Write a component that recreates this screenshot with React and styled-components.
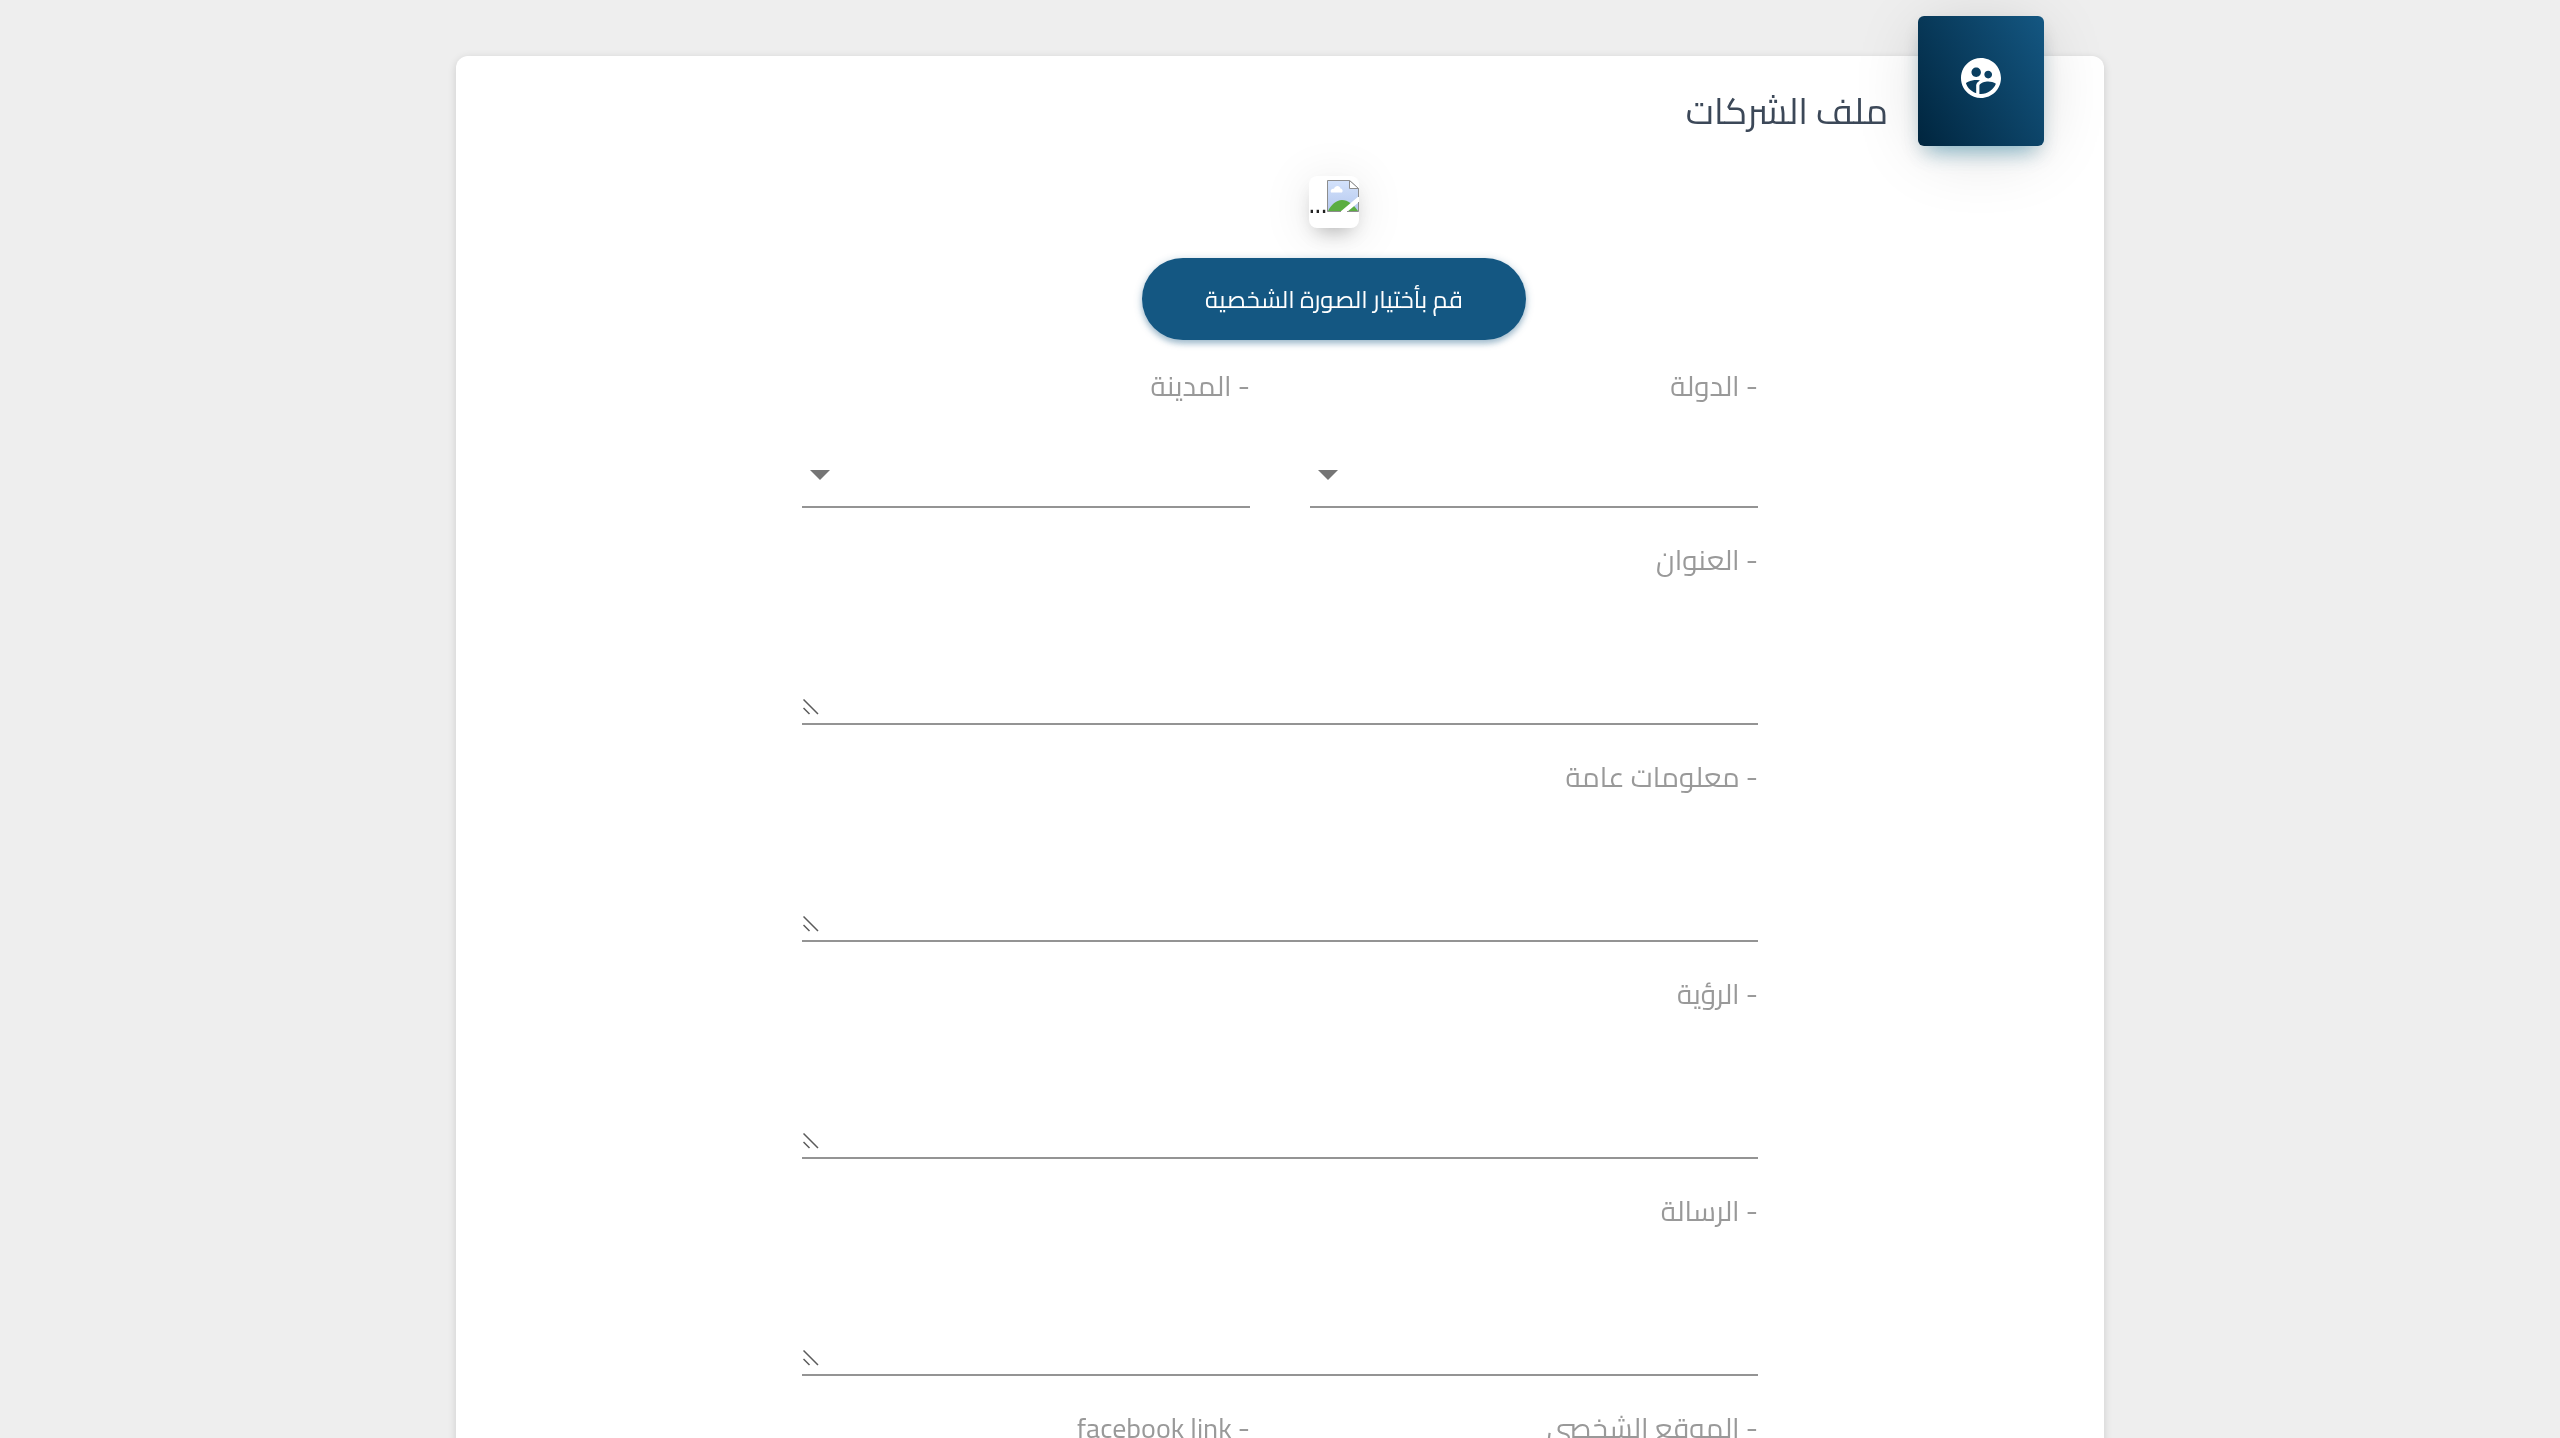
import React from "react";
import styled, { createGlobalStyle } from "styled-components";

const GlobalStyle = createGlobalStyle`
  * { box-sizing: border-box; }
  body {
    margin: 0;
    background: #eee;
    font-family: Cairo, "Noto Kufi Arabic", "DejaVu Sans", sans-serif;
    font-weight: 400;
  }
`;

const Page = styled.main`
  display: flex;
  justify-content: center;
  padding: 56px 30px;
`;

const Card = styled.section`
  width: 100%;
  max-width: 1648px;
  padding: 0 60px 60px;
  border-radius: 12px;
  background: #fff;
  color: rgba(0, 0, 0, 0.87);
  box-shadow: 0 2px 8px rgba(0, 0, 0, 0.14);
  will-change: transform;
`;

const Header = styled.header`
  display: flex;
  align-items: flex-start;
  gap: 30px;
  height: 120px;
`;

const IconTile = styled.div`
  display: flex;
  flex: none;
  justify-content: center;
  width: 126px;
  height: 130px;
  margin-top: -40px;
  padding-top: 38px;
  border-radius: 6px;
  background: linear-gradient(60deg, #00253e, #145782);
  box-shadow:
    0 8px 20px 0 rgba(0, 0, 0, 0.1),
    0 14px 20px -10px rgba(0, 140, 190, 0.4),
    0 8px 76px -12px rgba(0, 0, 0, 0.2);
  color: #fff;

  svg {
    width: 48px;
    height: 48px;
    fill: currentColor;
  }
`;

const Title = styled.h1`
  margin: 22px 0 0;
  color: #3c4858;
  font-size: 36px;
  font-weight: 400;
  line-height: 66px;
`;

const Upload = styled.div`
  display: flex;
  flex-direction: column;
  align-items: center;
  gap: 30px;
  padding-left: 108px;
`;

const Thumb = styled.div`
  display: flex;
  width: 50px;
  height: 52px;
  padding-top: 4px;
  border-radius: 8px;
  background: #fff;
  box-shadow:
    0 10px 20px -8px rgba(0, 0, 0, 0.3),
    0 6px 50px rgba(0, 0, 0, 0.1);
  font-size: 28px;
  line-height: 46px;

  svg {
    flex: none;
    width: 32px;
    height: 32px;
  }
`;

const PickButton = styled.button`
  min-width: 384px;
  height: 82px;
  padding: 0 60px;
  border: 0;
  border-radius: 41px;
  background: #145782;
  box-shadow:
    0 4px 5px 0 rgba(20, 87, 130, 0.2),
    0 2px 8px 0 rgba(20, 87, 130, 0.3);
  color: #fff;
  font: inherit;
  font-size: 24px;
  cursor: pointer;
`;

const Form = styled.form`
  display: grid;
  grid-template-columns: repeat(2, 1fr);
  gap: 32px 60px;
  max-width: 956px;
  margin: 26px auto 0;
`;

const Field = styled.div`
  display: flex;
  flex-direction: column;
  grid-column: ${(p) => (p.$wide ? "1 / -1" : "auto")};
`;

const Label = styled.label`
  color: #999;
  font-size: 28px;
  line-height: 40px;
  white-space: nowrap;
`;

const Control = styled.div`
  position: relative;
  display: flex;
  height: ${(p) => (p.$tall ? 145 : 102)}px;
  padding-top: 30px;
  border-bottom: 2px solid #949494;
`;

const controlText = `
  width: 100%;
  border: 0;
  outline: 0;
  background: transparent;
  color: inherit;
  font: inherit;
  font-size: 28px;
`;

const Select = styled.select`
  ${controlText}
  appearance: none;
`;

const Input = styled.input`
  ${controlText}
`;

const TextArea = styled.textarea`
  ${controlText}
  resize: none;
`;

const Arrow = styled.svg`
  position: absolute;
  bottom: 26px;
  left: 8px;
  width: 20px;
  height: 10px;
  fill: #757575;
  pointer-events: none;
`;

const Grip = styled.svg`
  position: absolute;
  bottom: 8px;
  left: 1px;
  width: 16px;
  height: 16px;
  stroke: #5a5a5a;
  stroke-width: 1.5;
  pointer-events: none;
`;

const fields = [
  { id: "country", label: "الدولة", type: "select" },
  { id: "city", label: "المدينة", type: "select" },
  { id: "address", label: "العنوان", type: "area" },
  { id: "about", label: "معلومات عامة", type: "area" },
  { id: "vision", label: "الرؤية", type: "area" },
  { id: "mission", label: "الرسالة", type: "area" },
  { id: "website", label: "الموقع الشخصي", type: "text" },
  { id: "facebook", label: "facebook link", type: "text" },
];

function FormField({ id, label, type }) {
  const area = type === "area";
  return (
    <Field $wide={area}>
      <Label htmlFor={id}>- {label}</Label>
      <Control $tall={area}>
        {type === "select" && (
          <>
            <Select id={id} />
            <Arrow viewBox="0 0 20 10" aria-hidden="true">
              <path d="M0 0h20L10 10z" />
            </Arrow>
          </>
        )}
        {area && (
          <>
            <TextArea id={id} />
            <Grip viewBox="0 0 16 16" aria-hidden="true">
              <path d="M.5.5l14.5 14.5M.5 9l6 6" />
            </Grip>
          </>
        )}
        {type === "text" && <Input id={id} type="text" />}
      </Control>
    </Field>
  );
}

function GroupIcon() {
  return (
    <svg viewBox="0 0 24 24" aria-hidden="true">
      <path d="M11.99 2c-5.52 0-10 4.48-10 10s4.48 10 10 10 10-4.48 10-10-4.48-10-10-10zm3.61 6.34c1.07 0 1.93.86 1.93 1.93s-.86 1.93-1.93 1.93-1.93-.86-1.93-1.93c-.01-1.07.86-1.93 1.93-1.93zm-6-1.58c1.3 0 2.36 1.06 2.36 2.36s-1.06 2.36-2.36 2.36-2.36-1.06-2.36-2.36c0-1.31 1.05-2.36 2.36-2.36zm0 9.13v3.75c-2.4-.75-4.3-2.6-5.14-4.96 1.05-1.12 3.67-1.69 5.14-1.69.53 0 1.2.08 1.9.22-1.64.87-1.9 2.02-1.9 2.68zM11.99 20c-.27 0-.53-.01-.79-.04v-4.07c0-1.42 2.94-2.13 4.4-2.13 1.07 0 2.92.39 3.84 1.15-1.17 2.97-4.06 5.09-7.45 5.09z" />
    </svg>
  );
}

function MissingImage() {
  return (
    <svg viewBox="0 0 32 32" aria-hidden="true">
      <defs>
        <linearGradient id="sky" x2="0" y2="1">
          <stop offset="0" stopColor="#d3e2fb" />
          <stop offset="1" stopColor="#b5c8ee" />
        </linearGradient>
      </defs>
      <path d="M.5.5H22L31.500 9v22.500H.5z" fill="url(#sky)" />
      <path d="M4 12.500c-1-3 1-4 3-3.800C8 5 13 5 13.500 8.500c2.500.5 2.500 3 1.500 4z" fill="#fff" />
      <path d="M1 31c3-6 8-11 14-11s11 4 16 11z" fill="#5bad41" />
      <path d="M13 32L32 16v6L20 32z" fill="#fff" />
      <path d="M31.500 17V8.500L22.500.5H.5v31H14M20 31.500h11.500V22" fill="none" stroke="#8d8d8d" />
      <path d="M22.500.5v8h9z" fill="#fff" stroke="#8d8d8d" />
    </svg>
  );
}

export default function App() {
  return (
    <Page dir="rtl" lang="ar">
      <GlobalStyle />
      <Card>
        <Header>
          <IconTile>
            <GroupIcon />
          </IconTile>
          <Title>ملف الشركات</Title>
        </Header>
        <Upload>
          <Thumb>
            <MissingImage />
            <span>...</span>
          </Thumb>
          <PickButton type="button">قم بأختيار الصورة الشخصية</PickButton>
        </Upload>
        <Form>
          {fields.map((field) => (
            <FormField key={field.id} {...field} />
          ))}
        </Form>
      </Card>
    </Page>
  );
}
